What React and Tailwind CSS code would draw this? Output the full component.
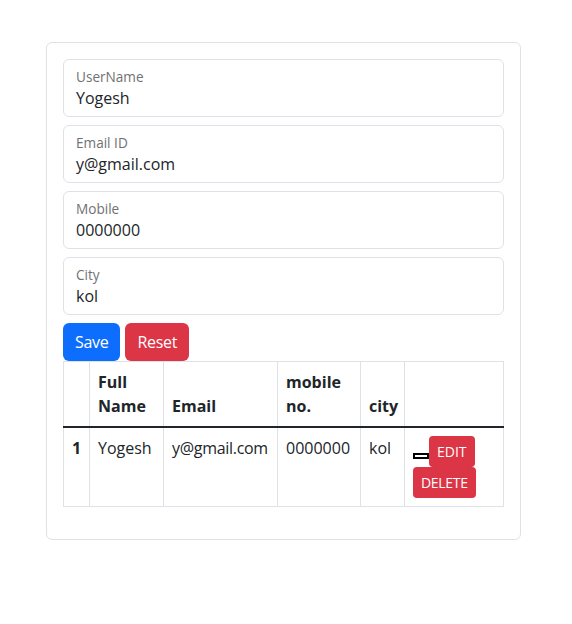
import React from "react";

const fields = [
  { label: "UserName", value: "Yogesh" },
  { label: "Email ID", value: "y@gmail.com" },
  { label: "Mobile", value: "0000000" },
  { label: "City", value: "kol" },
];

const users = [
  { id: 1, name: "Yogesh", email: "y@gmail.com", mobile: "0000000", city: "kol" },
];

function FloatingField({ label, value }) {
  return (
    <div className="mb-2 h-[58px] rounded-md border border-[#dee2e6] bg-white px-3 pt-[7px]">
      <div className="text-[13.6px] leading-[19px] text-[#6f7173]">{label}</div>
      <div className="text-base leading-6 text-[#212529]">{value}</div>
    </div>
  );
}

export default function App() {
  return (
    <div
      className="min-h-[624px] bg-white pt-[42px] pl-[46px] text-[#212529]"
      style={{ fontFamily: '"Open Sans", "Noto Sans", sans-serif' }}
    >
      <div className="w-[475px] rounded-md border border-[#dee2e6] p-4">
        {fields.map((f) => (
          <FloatingField key={f.label} label={f.label} value={f.value} />
        ))}

        <div className="flex gap-[5px]">
          <button className="h-[38px] rounded-md bg-[#0d6efd] px-3 text-base leading-6 tracking-[-0.3px] text-white">
            Save
          </button>
          <button className="h-[38px] rounded-md bg-[#dc3545] px-3 text-base leading-6 tracking-[-0.3px] text-white">
            Reset
          </button>
        </div>

        {/* users table */}
        <table className="mb-4 w-[440px] table-fixed border-collapse text-base leading-6">
          <colgroup>
            <col className="w-[26px]" />
            <col className="w-[74px]" />
            <col className="w-[114px]" />
            <col className="w-[83px]" />
            <col className="w-[44px]" />
            <col className="w-[99px]" />
          </colgroup>
          <thead>
            <tr className="align-bottom">
              <th className="border border-[#dee2e6] border-b-2 border-b-[#212529] p-2 text-left font-bold"></th>
              <th className="border border-[#dee2e6] border-b-2 border-b-[#212529] p-2 text-left font-bold">Full Name</th>
              <th className="border border-[#dee2e6] border-b-2 border-b-[#212529] p-2 text-left font-bold">Email</th>
              <th className="border border-[#dee2e6] border-b-2 border-b-[#212529] p-2 text-left font-bold">mobile no.</th>
              <th className="border border-[#dee2e6] border-b-2 border-b-[#212529] p-2 text-left font-bold">city</th>
              <th className="border border-[#dee2e6] border-b-2 border-b-[#212529] p-2 text-left font-bold"></th>
            </tr>
          </thead>
          <tbody>
            {users.map((u) => (
              <tr key={u.id} className="align-top">
                <th className="border border-[#dee2e6] p-2 text-left font-bold">{u.id}</th>
                <td className="border border-[#dee2e6] p-2">{u.name}</td>
                <td className="border border-[#dee2e6] p-2 tracking-[-0.3px]">{u.email}</td>
                <td className="border border-[#dee2e6] p-2">{u.mobile}</td>
                <td className="border border-[#dee2e6] p-2">{u.city}</td>
                <td className="border border-[#dee2e6] p-2">
                  <div className="flex flex-wrap items-end">
                    <span className="mb-[8px] inline-block h-[6px] w-[16px] border-2 border-black"></span>
                    <button className="h-[31px] rounded bg-[#dc3545] px-2 text-sm leading-[21px] text-white">
                      EDIT
                    </button>
                    <button className="h-[31px] rounded bg-[#dc3545] px-2 text-sm leading-[21px] tracking-[-0.3px] text-white">
                      DELETE
                    </button>
                  </div>
                </td>
              </tr>
            ))}
          </tbody>
        </table>
      </div>
    </div>
  );
}
